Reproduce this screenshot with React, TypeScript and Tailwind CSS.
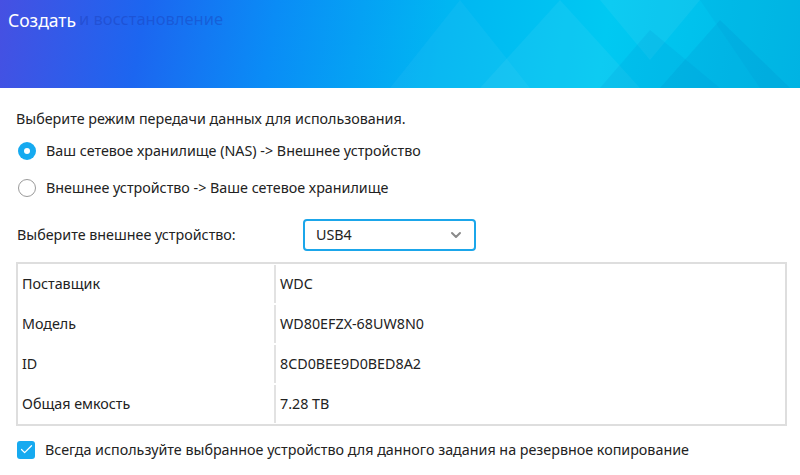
import React from 'react';
import { ChevronDown, Check } from 'lucide-react';

const rows: [string, string][] = [
  ['Поставщик', 'WDC'],
  ['Модель', 'WD80EFZX-68UW8N0'],
  ['ID', '8CD0BEE9D0BED8A2'],
  ['Общая емкость', '7.28 TB'],
];

const Header = () => (
  <div className="relative h-[88px] overflow-hidden bg-[linear-gradient(100deg,#4650e2_0%,#1c66f0_18%,#0a8cf6_34%,#00b6f2_55%,#00c9f2_75%,#00b8e6_100%)]">
    <svg className="absolute inset-0 h-full w-full" viewBox="0 0 800 88" preserveAspectRatio="none">
      <polygon points="460,0 530,88 390,88" fill="#ffffff" opacity="0.04" />
      <polygon points="560,0 640,88 480,88" fill="#ffffff" opacity="0.05" />
      <polygon points="600,0 700,0 650,60" fill="#ffffff" opacity="0.05" />
      <polygon points="650,30 720,88 600,88" fill="#0090d0" opacity="0.15" />
      <polygon points="700,0 800,0 800,88 760,88" fill="#0090d0" opacity="0.12" />
      <polygon points="720,20 790,88 660,88" fill="#0070c0" opacity="0.12" />
    </svg>
    <span className="absolute left-[79px] top-[7px] whitespace-nowrap text-[16.5px] text-[#1a3fb8]/45">
      и восстановление
    </span>
    <span className="absolute left-[8px] top-[7px] text-[17.5px] text-white">Создать</span>
  </div>
);

export default function App() {
  return (
    <div className="h-[475px] w-[800px] overflow-hidden bg-white font-['Noto_Sans',sans-serif] text-[14.3px] text-[#222]">
      <Header />
      <div className="px-4 pt-[21px]">
        <p className="leading-5">Выберите режим передачи данных для использования.</p>

        <div className="mt-[11px] flex flex-col gap-4">
          <label className="flex items-center gap-[10px] pl-[2px]">
            <span className="flex h-[18px] w-[18px] items-center justify-center rounded-full bg-[#16aaf0]">
              <span className="h-[6px] w-[6px] rounded-full bg-white" />
            </span>
            <span>Ваш сетевое хранилище (NAS) -&gt; Внешнее устройство</span>
          </label>
          <label className="flex items-center gap-[10px] pl-[2px]">
            <span className="h-[18px] w-[18px] rounded-full border border-[#9a9a9a]" />
            <span>Внешнее устройство -&gt; Ваше сетевое хранилище</span>
          </label>
        </div>

        <div className="mt-[20px] flex items-center">
          <span className="w-[287px] pl-[1px]">Выберите внешнее устройство:</span>
          <div className="flex h-[32px] w-[173px] items-center justify-between rounded-[4px] border-2 border-[#1ba6ea] pl-[11px] pr-[10px]">
            <span>USB4</span>
            <ChevronDown size={16} strokeWidth={3} className="text-[#8a8a8a]" />
          </div>
        </div>

        <div className="mt-[11px] mr-[-3px] border-2 border-[#dedede]">
          {rows.map(([k, v]) => (
            <div key={k} className="flex h-[40px] items-center">
              <div className="w-[256px] pl-[4px]">{k}</div>
              <div className="flex h-[38px] items-center border-l-2 border-[#e2e2e2] pl-[4px]">{v}</div>
            </div>
          ))}
        </div>

        <label className="mt-[13px] flex items-center gap-[10px] pl-[1px]">
          <span className="flex h-[18px] w-[18px] items-center justify-center rounded-[3px] bg-[#16aaf0]">
            <Check size={15} strokeWidth={2} className="text-white" />
          </span>
          <span>Всегда используйте выбранное устройство для данного задания на резервное копирование</span>
        </label>
      </div>
    </div>
  );
}
